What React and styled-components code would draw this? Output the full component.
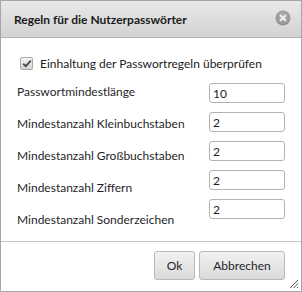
import React from "react";
import styled, { createGlobalStyle } from "styled-components";

const GlobalStyle = createGlobalStyle`
  html, body {
    margin: 0;
    padding: 0;
    background: #ffffff;
  }
  body {
    font-family: Lato, "Noto Sans", sans-serif;
  }
`;

const rules = [
  { label: "Passwortmindestlänge", value: "10" },
  { label: "Mindestanzahl Kleinbuchstaben", value: "2" },
  { label: "Mindestanzahl Großbuchstaben", value: "2" },
  { label: "Mindestanzahl Ziffern", value: "2" },
  { label: "Mindestanzahl Sonderzeichen", value: "2" },
];

const Dialog = styled.div`
  width: 302px;
  height: 292px;
  box-sizing: border-box;
  border: 1px solid #a6a6a6;
  display: flex;
  flex-direction: column;
  background: #fff;
  position: relative;
`;

const TitleBar = styled.div`
  height: 36px;
  border-bottom: 1px solid #b4b4b4;
  background: linear-gradient(#e9e9e9, #d2d2d2);
  display: flex;
  align-items: center;
  justify-content: space-between;
  padding: 0 10px 0 13px;
`;

const Title = styled.h1`
  margin: 0;
  font-size: 12px;
  font-weight: 700;
  color: #1a1a1a;
`;

const CloseButton = styled.button`
  border: 0;
  padding: 0;
  background: none;
  width: 16px;
  height: 16px;
  display: flex;
  margin-top: -2px;
`;

const Body = styled.div`
  flex: 1;
  padding: 19px 16px 0 16px;
`;

const CheckRow = styled.label`
  display: flex;
  align-items: center;
  gap: 7px;
  padding-left: 3px;
  height: 13px;
  font-size: 12px;
  color: #222;
  white-space: nowrap;
`;

const CheckBox = styled.span`
  width: 11px;
  height: 11px;
  flex: none;
  border: 1px solid #a9a9a9;
  border-radius: 2px;
  background: linear-gradient(#f4f4f4, #d4d4d4);
  display: flex;
  align-items: center;
  justify-content: center;
`;

const Fields = styled.div`
  display: flex;
  justify-content: space-between;
  margin-top: 13px;
`;

const LabelColumn = styled.div`
  display: flex;
  flex-direction: column;
  gap: 16px;
  padding-top: 1px;
`;

const FieldLabel = styled.span`
  font-size: 12px;
  line-height: 16px;
  color: #1f1f2a;
  white-space: nowrap;
`;

const InputColumn = styled.div`
  display: flex;
  flex-direction: column;
  gap: 9px;
`;

const NumberInput = styled.input`
  width: 76px;
  height: 20px;
  box-sizing: border-box;
  border: 1px solid #b3b3b3;
  border-radius: 3px;
  padding: 0 3px;
  font-family: Lato, "Noto Sans", sans-serif;
  font-size: 12px;
  color: #222;
  background: #fff;
  outline: none;
`;

const Footer = styled.div`
  height: 50px;
  border-top: 1px solid #c6c6c6;
  display: flex;
  justify-content: flex-end;
  align-items: flex-start;
  gap: 4px;
  padding: 9px 16px 0 0;
  box-sizing: border-box;
`;

const Button = styled.button`
  height: 29px;
  min-width: ${(p) => p.$width}px;
  box-sizing: border-box;
  border: 1px solid #b8b8b8;
  border-radius: 3px;
  background: linear-gradient(#f2f2f2, #dadada);
  font-family: Lato, "Noto Sans", sans-serif;
  font-size: 12px;
  color: #1f1f2a;
  padding: 0 10px;
`;

const Grip = styled.svg`
  position: absolute;
  right: 2px;
  bottom: 2px;
`;

function CloseIcon() {
  return (
    <svg width="16" height="16" viewBox="0 0 16 16">
      <defs>
        <radialGradient id="cg" cx="50%" cy="40%" r="60%">
          <stop offset="0%" stopColor="#b9b9b9" />
          <stop offset="100%" stopColor="#8e8e8e" />
        </radialGradient>
      </defs>
      <circle cx="8" cy="8" r="7.5" fill="url(#cg)" />
      <path
        d="M5.6 5.6 L10.4 10.4 M10.4 5.6 L5.6 10.4"
        stroke="#f2f2f2"
        strokeWidth="2"
        strokeLinecap="round"
      />
    </svg>
  );
}

function CheckIcon() {
  return (
    <svg width="10" height="9" viewBox="0 0 10 9">
      <path
        d="M1.2 4.8 L3.8 7.2 L8.8 1.6"
        fill="none"
        stroke="#4a4a4a"
        strokeWidth="1.9"
      />
    </svg>
  );
}

export default function App() {
  return (
    <>
      <GlobalStyle />
      <Dialog>
        <TitleBar>
          <Title>Regeln für die Nutzerpasswörter</Title>
          <CloseButton aria-label="Schließen">
            <CloseIcon />
          </CloseButton>
        </TitleBar>
        <Body>
          <CheckRow>
            <CheckBox>
              <CheckIcon />
            </CheckBox>
            Einhaltung der Passwortregeln überprüfen
          </CheckRow>
          <Fields>
            <LabelColumn>
              {rules.map((r) => (
                <FieldLabel key={r.label}>{r.label}</FieldLabel>
              ))}
            </LabelColumn>
            <InputColumn>
              {rules.map((r) => (
                <NumberInput key={r.label} defaultValue={r.value} />
              ))}
            </InputColumn>
          </Fields>
        </Body>
        <Footer>
          <Button $width={41}>Ok</Button>
          <Button $width={86}>Abbrechen</Button>
        </Footer>
        <Grip width="10" height="10" viewBox="0 0 10 10">
          <path
            d="M9 1 L1 9 M9 4.5 L4.5 9 M9 8 L8 9"
            stroke="#555"
            strokeWidth="1"
          />
        </Grip>
      </Dialog>
    </>
  );
}
